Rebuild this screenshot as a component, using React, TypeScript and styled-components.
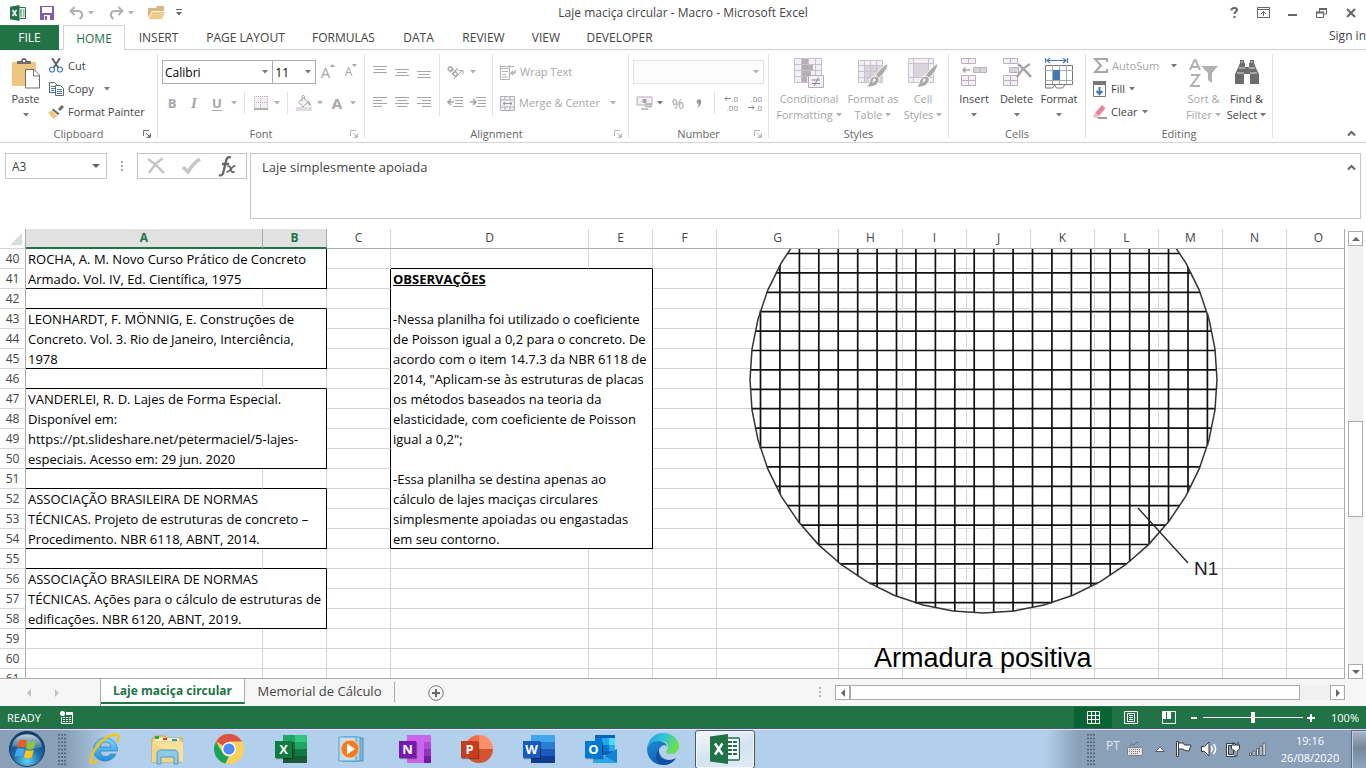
import React from 'react';
import styled, { createGlobalStyle, css } from 'styled-components';

const UI = '"Open Sans", "Noto Sans", sans-serif';
const GREEN = '#217346';

const GlobalStyle = createGlobalStyle`
  * { box-sizing: border-box; }
  html, body, #root { height: 100%; }
  body { margin: 0; background: #fff; font-family: ${UI}; font-size: 11px; color: #444; overflow: hidden; }
  button, input, select, textarea { font: inherit; color: inherit; margin: 0; padding: 0; border: 0; background: none; border-radius: 0; outline: none; }
  svg { display: block; flex: none; }
`;

/* ---------- frame ---------- */

const Window = styled.div`
  display: flex;
  flex-direction: column;
  height: 100vh;
  overflow: hidden;
`;

const TitleBar = styled.header`
  display: grid;
  grid-template-columns: 1fr auto 1fr;
  align-items: center;
  height: 25px;
  flex: none;
`;

const QuickAccess = styled.div`
  display: flex;
  align-items: center;
  padding-left: 10px;
  height: 22px;
`;

const HistoryPair = styled.div`
  display: flex;
  align-items: center;
  width: 40px;
`;

const WindowTitle = styled.h1`
  margin: 0;
  font-size: 12px;
  font-weight: 400;
  line-height: 24px;
`;

const WindowButtons = styled.div`
  display: flex;
  justify-content: flex-end;
  align-items: center;
  gap: 6px;
  padding-right: 4px;
  height: 22px;
`;

const IconButton = styled.button<{ $w?: number; $h?: number }>`
  display: flex;
  align-items: center;
  justify-content: center;
  flex: none;
  width: ${(p) => (p.$w ? `${p.$w}px` : 'auto')};
  height: ${(p) => (p.$h ? `${p.$h}px` : 'auto')};
`;

/* ---------- ribbon tabs ---------- */

const TabRow = styled.nav`
  display: flex;
  height: 25px;
  flex: none;
  border-bottom: 1px solid #d4d4d4;
`;

const FileTab = styled.button`
  width: 59px;
  height: 25px;
  margin-right: 4px;
  background: ${GREEN};
  color: #fff;
  font-size: 12px;
`;

const RibbonTab = styled.button<{ $active?: boolean; $w: number }>`
  width: ${(p) => p.$w}px;
  height: 25px;
  font-size: 12px;
  white-space: nowrap;
  ${(p) =>
    p.$active &&
    css`
      color: ${GREEN};
      background: #fff;
      border: 1px solid #d4d4d4;
      border-bottom: 0;
    `}
`;

const SignIn = styled.a`
  margin-left: auto;
  line-height: 21px;
  color: #444;
  text-decoration: none;
  font-size: 12px;
  white-space: nowrap;
`;

/* ---------- ribbon ---------- */

const Ribbon = styled.section`
  display: flex;
  height: 93px;
  flex: none;
  padding: 4px 0;
  border-bottom: 1px solid #d4d4d4;
`;

const Group = styled.section<{ $w: number }>`
  display: flex;
  flex-direction: column;
  width: ${(p) => p.$w}px;
  flex: none;
  border-right: 1px solid #e1e1e1;
`;

const GroupBody = styled.div<{ $left?: number }>`
  display: flex;
  flex: 1;
  padding-left: ${(p) => p.$left ?? 0}px;
`;

const GroupFooter = styled.div`
  display: grid;
  grid-template-columns: 12px 1fr 12px;
  align-items: center;
  height: 14px;
  margin-bottom: -3px;
  padding: 0 2px;
  color: #666;
  text-align: center;
  line-height: 14px;
`;

const BigButton = styled.button<{ $w: number; $dim?: boolean }>`
  display: flex;
  flex-direction: column;
  align-items: center;
  width: ${(p) => p.$w}px;
  padding-top: 4px;
  line-height: 16px;
  color: ${(p) => (p.$dim ? '#a6a6a6' : '#444')};
  white-space: nowrap;
  svg:first-child { margin-bottom: 2px; }
`;

const LabelRow = styled.span`
  display: flex;
  align-items: center;
  justify-content: center;
  gap: 3px;
  height: 16px;
  && svg { margin: 0; }
`;

const Stack = styled.div<{ $w?: number }>`
  display: flex;
  flex-direction: column;
  width: ${(p) => (p.$w ? `${p.$w}px` : 'auto')};
`;

const SmallButton = styled.button<{ $dim?: boolean; $gap?: number }>`
  display: flex;
  align-items: center;
  height: 23px;
  gap: 4px;
  color: ${(p) => (p.$dim ? '#a6a6a6' : '#444')};
  white-space: nowrap;
  line-height: 16px;
  > svg:last-child { margin-left: ${(p) => p.$gap ?? 0}px; }
`;

const IconCell = styled.span`
  display: flex;
  justify-content: center;
  width: 16px;
`;

const ToolRow = styled.div<{ $top?: number }>`
  display: flex;
  align-items: center;
  height: 24px;
  margin-top: ${(p) => p.$top ?? 0}px;
`;

const ToolColumn = styled.div<{ $w: number; $line?: boolean; $left?: number }>`
  display: flex;
  flex-direction: column;
  width: ${(p) => p.$w}px;
  padding: 6px 0 0 ${(p) => p.$left ?? 0}px;
  ${(p) => p.$line && 'border-right: 1px solid #e1e1e1; height: 62px;'}
`;

const Divider = styled.span<{ $m?: number }>`
  width: 1px;
  height: 22px;
  margin: 0 ${(p) => p.$m ?? 8}px;
  background: #e1e1e1;
`;

const Combo = styled.label<{ $w: number; $dim?: boolean; $overlap?: boolean }>`
  position: relative;
  display: flex;
  align-items: center;
  width: ${(p) => p.$w}px;
  height: 24px;
  margin-left: ${(p) => (p.$overlap ? -1 : 0)}px;
  border: 1px solid ${(p) => (p.$dim ? '#e1e1e1' : '#ababab')};
  background: ${(p) => (p.$dim ? '#fdfdfd' : '#fff')};
  select {
    appearance: none;
    width: 100%;
    height: 22px;
    padding-left: 2px;
    font-size: 12px;
    color: #000;
  }
  svg { position: absolute; right: 4px; }
`;

const Glyph = styled.span<{ $size?: number; $bold?: boolean; $italic?: boolean; $under?: boolean }>`
  font-size: ${(p) => p.$size ?? 13}px;
  font-weight: ${(p) => (p.$bold ? 700 : 400)};
  font-style: ${(p) => (p.$italic ? 'italic' : 'normal')};
  font-family: ${(p) => (p.$italic ? '"Liberation Serif", serif' : UI)};
  text-decoration: ${(p) => (p.$under ? 'underline' : 'none')};
  text-underline-offset: 2px;
  line-height: 20px;
  color: #a6a6a6;
`;

const SizeMark = styled.span`
  height: 16px;
`;

const CollapseSlot = styled.div`
  display: flex;
  flex: 1;
  align-items: flex-end;
  justify-content: flex-end;
  padding: 0 10px 1px 0;
`;

/* ---------- formula bar ---------- */

const FormulaBar = styled.section`
  display: flex;
  align-items: flex-start;
  height: 86px;
  flex: none;
  padding: 10px 5px 10px;
`;

const NameBox = styled.label`
  display: flex;
  align-items: center;
  width: 102px;
  height: 26px;
  padding: 0 6px;
  border: 1px solid #c6c6c6;
  input { width: 80px; font-size: 12px; }
`;

const Grip = styled.span`
  display: flex;
  width: 30px;
  height: 26px;
  align-items: center;
  justify-content: center;
`;

const FormulaButtons = styled.div`
  display: flex;
  align-items: center;
  width: 110px;
  height: 26px;
  padding: 0 9px;
  justify-content: space-between;
  border: 1px solid #c6c6c6;
`;

const FormulaInput = styled.div`
  display: flex;
  flex: 1;
  height: 66px;
  margin-left: 3px;
  padding: 4px 3px 4px 11px;
  border: 1px solid #c6c6c6;
  textarea {
    flex: 1;
    height: 56px;
    resize: none;
    font-size: 13px;
    line-height: 18px;
  }
  svg { margin-top: 6px; }
`;

/* ---------- sheet ---------- */

const Workspace = styled.main`
  display: flex;
  flex: 1;
  min-height: 0;
`;

const SheetPane = styled.div`
  position: relative;
  flex: 1;
  overflow: hidden;
  border-right: 1px solid #ababab;
  border-bottom: 1px solid #ababab;
`;

const Grid = styled.table`
  width: 1px;
  table-layout: fixed;
  border-collapse: separate;
  border-spacing: 0;
  color: #000;
  tr { height: 20px; }
  th, td { padding: 0; vertical-align: top; }
`;

const SheetCol = styled.col<{ $w: number }>`
  width: ${(p) => p.$w}px;
`;

const ColHead = styled.th<{ $selected?: boolean }>`
  height: 20px;
  font-size: 12px;
  line-height: 18px;
  font-weight: ${(p) => (p.$selected ? 700 : 400)};
  color: ${(p) => (p.$selected ? GREEN : '#444')};
  background: ${(p) => (p.$selected ? '#e1e1e1' : '#fff')};
  border-right: 1px solid ${(p) => (p.$selected ? '#ababab' : '#d8d8d8')};
  border-bottom: ${(p) => (p.$selected ? `2px solid ${GREEN}` : '1px solid #ababab')};
`;

const Corner = styled.th`
  border-right: 1px solid #ababab;
  border-bottom: 1px solid #d4d4d4;
  svg { margin: 4px 0 0 10px; }
`;

const RowHead = styled.th`
  height: 20px;
  font-size: 12px;
  font-weight: 400;
  line-height: 19px;
  color: #444;
  border-right: 1px solid #ababab;
  border-bottom: 1px solid #d8d8d8;
`;

const Cell = styled.td<{ $r?: boolean; $b?: boolean }>`
  border-right: 1px solid ${(p) => (p.$r ? '#000' : '#d4d4d4')};
  border-bottom: 1px solid ${(p) => (p.$b ? '#000' : '#d4d4d4')};
`;

const CellText = styled.div`
  margin-bottom: -1px;
  padding: 0 2px;
  font-size: 13px;
  line-height: 20px;
  white-space: pre;
  strong { text-decoration: underline; }
`;

const Drawing = styled.svg`
  position: absolute;
  left: 717px;
  top: 20px;
  font-family: "Liberation Sans", Arial, sans-serif;
`;

/* ---------- scroll bars ---------- */

const VScroll = styled.div`
  display: flex;
  flex-direction: column;
  width: 18px;
  margin: 2px 3px 0 0;
  padding-left: 3px;
`;

const ScrollButton = styled.button`
  display: flex;
  align-items: center;
  justify-content: center;
  flex: none;
  width: 15px;
  height: 15px;
  border: 1px solid #ababab;
  background: #fff;
`;

const Track = styled.div<{ $grow: number }>`
  flex: ${(p) => p.$grow} 0 0;
  background: #f0f0f0;
`;

const Thumb = styled.div<{ $grow: number }>`
  flex: ${(p) => p.$grow} 0 0;
  border: 1px solid #ababab;
  background: #fff;
`;

/* ---------- sheet tabs ---------- */

const SheetTabs = styled.footer`
  display: flex;
  height: 27px;
  flex: none;
  background: #f6f6f6;
`;

const TabArrows = styled.div`
  display: flex;
  width: 101px;
  padding: 0 39px 0 25px;
  align-items: center;
  justify-content: space-between;
  border-right: 1px solid #ababab;
`;

const SheetTab = styled.button<{ $active?: boolean; $w: number }>`
  width: ${(p) => p.$w}px;
  height: 24px;
  font-size: 12px;
  white-space: nowrap;
  ${(p) =>
    p.$active
      ? css`
          margin-top: -1px;
          height: 26px;
          background: #fff;
          color: ${GREEN};
          font-weight: 700;
          border-right: 1px solid #ababab;
          border-bottom: 2px solid ${GREEN};
        `
      : css`
          height: 20px;
          margin-top: 3px;
          padding-bottom: 2px;
          font-size: 13px;
          line-height: 18px;
          border-right: 1px solid #ababab;
        `}
`;

const HScroll = styled.div`
  display: flex;
  width: 510px;
  height: 15px;
  margin: 6px 21px 0 0;
`;

const Spacer = styled.div`
  flex: 1;
`;

/* ---------- status bar ---------- */

const StatusBar = styled.footer`
  display: flex;
  align-items: center;
  height: 23px;
  flex: none;
  padding: 0 7px;
  background: ${GREEN};
  color: #fff;
  font-size: 11px;
`;

const ViewButton = styled.button<{ $active?: boolean }>`
  display: flex;
  align-items: center;
  justify-content: center;
  width: 38px;
  height: 21px;
  background: ${(p) => (p.$active ? '#0a6332' : 'transparent')};
`;

const ZoomSlider = styled.input`
  appearance: none;
  width: 100px;
  height: 11px;
  margin: 0 4px;
  background: linear-gradient(#fff, #fff) center / 100% 1px no-repeat;
  &::-webkit-slider-thumb {
    appearance: none;
    width: 4px;
    height: 11px;
    background: #fff;
  }
`;

/* ---------- taskbar ---------- */

const Taskbar = styled.footer`
  display: flex;
  align-items: center;
  height: 39px;
  flex: none;
  border-top: 1px solid #dce8f4;
  box-shadow: 0 -1px 0 #47596b;
  background: linear-gradient(90deg, #8aa0b8 0, #8aa0b8 66px, #b2cfeb 112px, #b2cfeb calc(100% - 320px), #8aa0b8 calc(100% - 288px), #8aa0b8 100%);
`;

const TaskButton = styled.button<{ $active?: boolean }>`
  display: flex;
  align-items: center;
  justify-content: center;
  width: ${(p) => (p.$active ? 60 : 62)}px;
  height: 39px;
  margin-left: ${(p) => (p.$active ? 1 : 0)}px;
  ${(p) =>
    p.$active &&
    css`
      border: 1px solid #4a5a6b;
      border-radius: 3px;
      background: linear-gradient(160deg, #f6f9fc, #d3e2f1 55%, #e2ecf6);
      box-shadow: inset 0 0 0 1px #f4f8fc;
    `}
`;

const LaunchGrip = styled.span`
  display: flex;
  width: 20px;
  padding-left: 4px;
`;

const Tray = styled.div`
  display: flex;
  align-items: center;
  margin-left: auto;
  color: #fff;
`;

const Language = styled.span`
  width: 15px;
  margin-left: 10px;
  color: #e3e9ef;
  font-size: 12px;
  line-height: 30px;
  height: 36px;
`;

const TraySlot = styled.span<{ $w: number }>`
  display: flex;
  justify-content: center;
  width: ${(p) => p.$w}px;
`;

const Clock = styled.div`
  width: 82px;
  text-align: center;
  line-height: 17px;
  font-size: 11px;
`;

const ShowDesktop = styled.button`
  width: 15px;
  height: 39px;
  border: 1px solid #56697c;
  border-right: 0;
  background: linear-gradient(#a9b8c8, #74889d 45%, #8fa6bd);
  box-shadow: inset 1px 1px 0 #c3d0dd;
`;

/* ---------- icons ---------- */

const Caret = ({ c = '#777' }: { c?: string }) => (
  <svg width="6" height="4" viewBox="0 0 6 4"><path d="M0 0h6L3 3.4z" fill={c} /></svg>
);
const DIM = '#b1b1b1';
const PALE = '#f4eef6';

const Launcher = ({ dim }: { dim?: boolean }) => (
  <svg width="8" height="8" viewBox="0 0 8 8" fill="none" stroke={dim ? '#b8b8b8' : '#777'}>
    <path d="M.5 6V.5H6M3 3l3 3M7.5 3.5v4h-4" />
    <path d="M7 4.500V7H4.500z" fill={dim ? '#b8b8b8' : '#777'} stroke="none" />
  </svg>
);

const ExcelSmall = () => (
  <svg width="16" height="16" viewBox="0 0 16 16">
    <path d="M9 2.500h6.500v11H9" fill="#fff" stroke={GREEN} />
    <path d="M10 5h2M13 5h1.500M10 7h2M13 7h1.500M10 9h2M13 9h1.500M10 11h2M13 11h1.500" stroke={GREEN} />
    <path d="M0 1.700L9.500 0v16L0 14.300z" fill={GREEN} />
    <path d="M2.500 5l4 6M6.500 5l-4 6" stroke="#fff" strokeWidth="1.500" />
  </svg>
);
const SaveIcon = () => (
  <svg width="14" height="14" viewBox="0 0 14 14">
    <path d="M0 0h14v14H0z" fill="#8659b0" /><path d="M2 1h10v6H2zM4 9h6v5H4z" fill="#fff" /><path d="M5 10h2v4H5z" fill="#8659b0" />
  </svg>
);
const UndoIcon = ({ flip }: { flip?: boolean }) => (
  <svg width="15" height="14" viewBox="0 0 15 14" fill="none" stroke="#b1b1b1" strokeWidth="2">
    <g transform={flip ? 'matrix(-1 0 0 1 15 0)' : undefined}>
      <path d="M5.500 1L1.500 5l4 4M2 5h7c5 0 5.500 5.500 1.500 8" />
    </g>
  </svg>
);
const FolderIcon = () => (
  <svg width="17" height="13" viewBox="0 0 17 13">
    <path d="M0 12V2h8l1-2h7v5H4z" fill="#dcb67a" /><path d="M1 13l3-7h13l-3 7z" fill="#f0cb85" />
  </svg>
);
const CustomizeIcon = () => (
  <svg width="6" height="7" viewBox="0 0 6 7"><path d="M0 0h6v1H0zM0 3h6L3 6.500z" fill="#666" /></svg>
);
const HelpIcon = () => (
  <svg width="9" height="11" viewBox="0 0 9 11" fill="none" stroke="#666" strokeWidth="2">
    <path d="M1.500 3.500V2.500c1-2 5.500-2 5.500.500 0 1.500-2.500 1.500-2.500 4M4.500 9v2" />
  </svg>
);
const RibbonOptionsIcon = () => (
  <svg width="13" height="11" viewBox="0 0 13 11" fill="none" stroke="#666">
    <path d="M.5.500h12v10H.5zM0 2.500h13M6.500 9V4.500M4 7l2.500-2.500L9 7" />
  </svg>
);
const MinIcon = () => <svg width="9" height="8" viewBox="0 0 9 8"><path d="M0 5h9v2H0z" fill="#666" /></svg>;
const RestoreIcon = () => (
  <svg width="11" height="10" viewBox="0 0 11 10" fill="none" stroke="#666">
    <path d="M.5 4.500h7v5h-7zM3.500 4V.5h7v5.500H8" /><path d="M0 4.500h8M3 1h8" strokeWidth="2" />
  </svg>
);
const CloseIcon = () => (
  <svg width="10" height="10" viewBox="0 0 10 10"><path d="M1 1l8 8M9 1L1 9" stroke="#666" strokeWidth="2" /></svg>
);

const PasteIcon = () => (
  <svg width="28" height="31" viewBox="0 0 28 31">
    <rect x="0" y="4" width="24" height="24" rx="1" fill="#eec581" />
    <path d="M5 6V3h4c0-4 6-4 6 0h4v3z" fill="#6d6d6d" /><path d="M11 2h2v2h-2z" fill="#fff" />
    <path d="M13.500 11.500H22l5.500 5.500v13h-14z" fill="#fff" stroke="#6d6d6d" />
    <path d="M21.500 12v6h6" fill="none" stroke="#6d6d6d" />
  </svg>
);
const CutIcon = () => (
  <svg width="14" height="15" viewBox="0 0 14 15" fill="none">
    <path d="M3 0l6.500 10M11 0L4.500 10" stroke="#666" strokeWidth="2" />
    <circle cx="3" cy="11.500" r="2.500" stroke="#3f7ab5" strokeWidth="1.200" /><circle cx="11" cy="11.500" r="2.500" stroke="#3f7ab5" strokeWidth="1.200" />
  </svg>
);
const CopyIcon = () => (
  <svg width="15" height="14" viewBox="0 0 15 14" fill="#fff" stroke="#666">
    <path d="M.5.500h5l2 2v8h-7z" /><path d="M2 4.500h4M2 6.500h4M2 8.500h3" stroke="#3f7ab5" />
    <path d="M6.500 3.500h5l3 3v7h-8z" /><path d="M8 7.500h5M8 9.500h5M8 11.500h5" stroke="#3f7ab5" />
  </svg>
);
const PainterIcon = () => (
  <svg width="16" height="14" viewBox="0 0 16 14">
    <path d="M10 4l4-4 2 2-4 4z" fill="#666" /><path d="M5 3.500l6.500 5L10 10 4 5z" fill="#666" />
    <path d="M3.500 5.500l6 5L5.500 14 0 7.500z" fill="#eec581" />
  </svg>
);
const Borders = () => (
  <svg width="14" height="14" viewBox="0 0 14 14">
    <path d="M0 0h14v13H0z" fill={PALE} />
    <path d="M.5 0v13M6.500 0v13M13.500 0v13M0 .5h14M0 6.500h14" stroke="#b1b1b1" strokeDasharray="1 1" />
    <path d="M0 13h14" stroke="#999" strokeWidth="1.500" />
  </svg>
);
const FillIcon = () => (
  <svg width="16" height="16" viewBox="0 0 16 16">
    <path d="M0 12h16v4H0z" fill="#e2dbe4" />
    <path d="M2.500 7.500L7 2.500l5 4.500-5 5z" fill="#f4eef6" stroke="#a6a6a6" /><path d="M6 6V1.500c0-1.500 2.500-1.500 2.500 0V4" fill="none" stroke="#a6a6a6" />
    <path d="M12 6c2 1 3 3 3 5-2 0-2-3-4-3z" fill="#a6a6a6" />
  </svg>
);
const Lines = ({ d }: { d: string }) => (
  <svg width="14" height="12" viewBox="0 0 14 12"><path d={d} stroke="#a6a6a6" fill="none" /></svg>
);
const Orient = () => (
  <svg width="17" height="15" viewBox="0 0 17 15" fill="none" stroke="#a6a6a6">
    <g transform="rotate(45 6 6)" strokeWidth="1.300"><circle cx="2.500" cy="6.500" r="2" /><path d="M5 4v5M7.500 1v8" /><circle cx="9.800" cy="6.500" r="2" /></g>
    <path d="M7 14l8.500-8.500M12 5.500h4v4" />
  </svg>
);
const Indent = ({ out }: { out?: boolean }) => (
  <svg width="16" height="12" viewBox="0 0 16 12">
    <path d="M6 .5h10M8 3.500h8M8 6.500h8M6 9.500h10" stroke="#a6a6a6" />
    <path d={out ? 'M7 5H1M4 2L1 5l3 3' : 'M0 5h6M3 2l3 3-3 3'} stroke="#a6a6a6" strokeWidth="1.600" fill="none" />
  </svg>
);
const WrapIcon = () => (
  <svg width="16" height="15" viewBox="0 0 16 15" fill="none" stroke={DIM}>
    <path d="M0 1.500h14M.5 0v4M9.500 0v4M.5 3.500h9v11h-9zM2 6.500h6M2 9.500h4M2 12h6" /><path d="M15 5v3h-4M13 6l-2 2 2 2" strokeWidth="1.300" />
  </svg>
);
const MergeIcon = () => (
  <svg width="15" height="15" viewBox="0 0 15 15" fill={PALE} stroke={DIM}>
    <path d="M.5.500h14v14H.5zM0 4h15M0 11h15M5 0v4M10 0v4M5 11v4M10 11v4" /><path d="M3 7.500h9M5 6L3 7.500 5 9M10 6l2 1.500L10 9" stroke="#999" />
  </svg>
);
const MoneyIcon = () => (
  <svg width="17" height="15" viewBox="0 0 17 15">
    <path d="M1 1h15v8H1z" fill={PALE} stroke={DIM} /><circle cx="8.500" cy="5" r="2.200" fill="#a6a6a6" />
    <path d="M9 8h7M9 10.500h7M5 13h7" stroke={DIM} strokeWidth="1.500" />
  </svg>
);
const Comma = () => (
  <svg width="6" height="9" viewBox="0 0 6 9"><circle cx="3" cy="2.500" r="2.300" fill="#999" /><path d="M5.200 2.500C5.200 6 3.500 8 1 8.800 2.500 7 3 6 2.500 4z" fill="#999" /></svg>
);
const DecText = styled.span`
  display: flex;
  flex-direction: column;
  align-items: flex-end;
  width: 16px;
  font-size: 8px;
  line-height: 8px;
  color: #888;
  span { display: flex; align-items: center; height: 9px; }
`;
const TinyArrow = ({ right }: { right?: boolean }) => (
  <svg width="7" height="5" viewBox="0 0 7 5" fill="none" stroke="#888"><path d={right ? 'M0 2.500h6M4 .5l2 2-2 2' : 'M7 2.500H1M3 .5l-2 2 2 2'} /></svg>
);

const CondIcon = () => (
  <svg width="30" height="31" viewBox="0 0 30 31">
    <path d="M.5.500h27v24H.5z" fill={PALE} stroke="#c8c2ca" />
    <path d="M0 6.500h28M0 12.500h28M0 18.500h28M7.500 0v25M14.500 0v25M21.500 0v25" stroke="#c8c2ca" />
    <path d="M8 1h6v5H8zM8 7h11v5H8zM8 13h9v5H8zM8 19h5v5H8z" fill={DIM} />
    <path d="M14.500 17.500h15v12h-15z" fill={PALE} stroke={DIM} />
    <path d="M18 22h8M18 25.500h8M24.500 19.500l-4.500 8.500" stroke="#888" fill="none" />
  </svg>
);
const Brush = () => (
  <g>
    <path d="M30 5c0 6-6 13-10 16l-3-3C20 13 25 8 30 5z" fill="#ababab" stroke="#fff" />
    <path d="M18 18c4 1 4 4 2 7-3 4-7 4-12 4 3-2 3-4 4-7 1-2 3-4 6-4z" fill="#ababab" stroke="#fff" />
    <path d="M16 20l2 2-4 3z" fill="#fff" />
  </g>
);
const TableIcon = () => (
  <svg width="30" height="31" viewBox="0 0 30 31">
    <path d="M.5 2.500h24v22H.5z" fill={PALE} stroke="#c8c2ca" /><path d="M6 8h19v16H6z" fill="#dad5dc" />
    <path d="M0 7.500h25M0 13.500h25M0 19.500h25M6.500 2v22M12.500 2v22M18.500 2v22" stroke="#c8c2ca" />
    <Brush />
  </svg>
);
const StylesIcon = () => (
  <svg width="30" height="31" viewBox="0 0 30 31">
    <path d="M.5.500h25v24H.5z" fill={PALE} stroke="#c8c2ca" /><path d="M0 5.500h26M0 19.500h26M5.500 0v25M20.500 0v25" stroke="#c8c2ca" />
    <path d="M6 6h14v13H6z" fill="#dad5dc" />
    <Brush />
  </svg>
);
const InsertIcon = () => (
  <svg width="28" height="31" viewBox="0 0 28 31" fill={PALE} stroke="#b8b3ba">
    <path d="M1.500.500h14v5h-14zM8.500.500v5M1.500 17.500h14v10h-14zM8.500 17v11M1 22.500h15" />
    <path d="M13.500 9.500h13v5h-13zM20 10v5" fill="#dad5dc" /><path d="M10 12H3M5.500 9.500L3 12l2.500 2.500" stroke="#a6a6a6" strokeWidth="1.500" fill="none" />
  </svg>
);
const DeleteIcon = () => (
  <svg width="30" height="31" viewBox="0 0 30 31" fill={PALE} stroke="#b8b3ba">
    <path d="M1.500.500h14v5h-14zM8.500.500v5M1.500 17.500h14v10h-14zM8.500 17v11M1 22.500h15" />
    <path d="M7.500 9.500h9v5h-9z" fill="#dad5dc" /><path d="M16 6c4 4 9 8 13 13M28 6c-6 3-10 8-13 13" stroke="#a6a6a6" strokeWidth="2.500" fill="none" />
  </svg>
);
const FormatIcon = () => (
  <svg width="28" height="31" viewBox="0 0 28 31" fill="#fff">
    <path d="M.5 0v5M22.500 0v5M2 2.500h19M5 0L2 2.500 5 5M18 0l3 2.500L18 5" stroke="#3f7ab5" strokeWidth="1.200" fill="none" />
    <path d="M.5 7.500h27v19H.5z" stroke="#777" /><path d="M0 12.500h28M0 22.500h28M7.500 7v19M14.500 7v19M21.500 7v19" stroke="#aaa" />
    <path d="M8 12h7v10H8z" fill="#3f7ab5" />
    <path d="M.5 26v4h7l2-3 2 3h6l3-4" stroke="#777" fill="none" />
  </svg>
);
const SigmaIcon = () => (
  <svg width="15" height="15" viewBox="0 0 15 15" fill="none" stroke="#a6a6a6" strokeWidth="2"><path d="M14 4V1H2l6 6.500L2 14h12v-3" /></svg>
);
const FillDownIcon = () => (
  <svg width="14" height="16" viewBox="0 0 14 16"><path d="M.5.500h12v15H.5z" fill="#fff" stroke="#777" /><path d="M0 0h13v4H0z" fill="#777" /><path d="M6.500 6v7M3.500 10l3 3 3-3" fill="none" stroke="#3f7ab5" strokeWidth="2" /></svg>
);
const EraserIcon = () => (
  <svg width="14" height="14" viewBox="0 0 14 14"><path d="M9 0l3.500 3-6.500 8L2 8z" fill="#e8849a" /><path d="M2 8l4 3-1.500 2H2L0 11z" fill="#f4bcc8" /><path d="M5 13h9" stroke="#777" strokeWidth="1.500" /></svg>
);
const SortIcon = () => (
  <svg width="30" height="31" viewBox="0 0 30 31" fill="none" stroke="#b1b1b1" strokeWidth="2">
    <path d="M1 12L5.500 2h1L11 12M2.500 9h7M2 17h8L2 28h9" /><path d="M12 8h17l-6 7v10l-4-3v-7z" fill="#b1b1b1" stroke="none" />
  </svg>
);
const FindIcon = () => (
  <svg width="26" height="31" viewBox="0 0 26 31" fill="#6d6d6d">
    <path d="M6 2h4v3h1v4h4V5h1V2h4v3l2 5 3 6v10h-9V16h-6v10H1V16l3-6 2-5z" /><path d="M5 10h6M15 10h6M3 15h7M16 15h7M8 3v2M18 3v2" stroke="#fff" strokeWidth=".8" />
  </svg>
);

const Arrow = ({ dir, c = '#666' }: { dir: 'up' | 'down' | 'left' | 'right'; c?: string }) => {
  const d = { up: 'M0 6l4-4 4 4z', down: 'M0 2h8L4 6z', left: 'M6 0v8L2 4z', right: 'M2 0l4 4-4 4z' }[dir];
  return <svg width="8" height="8" viewBox="0 0 8 8"><path d={d} fill={c} /></svg>;
};
const SizeTip = ({ down }: { down?: boolean }) => (
  <svg width="5" height="3" viewBox="0 0 5 3"><path d={down ? 'M0 0h5L2.500 3z' : 'M0 3h5L2.500 0z'} fill="#a6a6a6" /></svg>
);
const Dots = ({ c = '#a6a6a6' }: { c?: string }) => (
  <svg width="2" height="10" viewBox="0 0 2 10"><path d="M0 0h2v2H0zM0 4h2v2H0zM0 8h2v2H0z" fill={c} /></svg>
);
const Chevron = ({ w = 9 }: { w?: number }) => (
  <svg width={w} height="7" viewBox="0 0 9 7"><path d="M1 5.500l3.500-3.500L8 5.500" fill="none" stroke="#666" strokeWidth="2" /></svg>
);

const TaskGrip = () => (
  <svg width="9" height="31" viewBox="0 0 9 31">
    {[0, 3, 6].map((x) => <path key={x} d={`M${x + 1} 0v31`} stroke="#3f4d5c" strokeWidth="1.500" strokeDasharray="1.500 2.200" />)}
  </svg>
);

const StartOrb = () => (
  <svg width="36" height="36" viewBox="0 0 36 36">
    <defs>
      <radialGradient id="orb" cx=".5" cy=".85" r=".9"><stop offset="0" stopColor="#5fd0f5" /><stop offset=".45" stopColor="#1d6ba5" /><stop offset="1" stopColor="#0f3560" /></radialGradient>
      <linearGradient id="orbTop" x2="0" y2="1"><stop offset="0" stopColor="#fff" stopOpacity=".75" /><stop offset="1" stopColor="#fff" stopOpacity=".15" /></linearGradient>
    </defs>
    <circle cx="18" cy="18" r="17.500" fill="url(#orb)" stroke="#1c3b5c" />
    <path d="M3 16C4-1 32-1 33 16c-10 4-20-3-30 0z" fill="url(#orbTop)" />
    <path d="M10 9.500c3-1.500 5-1.500 7.500 0L16 17c-3-1.500-5-1.500-8 0z" fill="#ee5a24" />
    <path d="M18.800 10c3 1.500 5 1.500 8.200 0l-2 7.500c-3 1.500-5 1.500-8 0z" fill="#8cc63f" />
    <path d="M7.500 18.200c3-1.300 5-1.300 8 0L13.500 26c-3-1.500-5-1.500-8 0z" fill="#3fa9f5" />
    <path d="M16.800 18.800c3 1.400 5 1.400 8 0l-2 7.500c-3 1.400-5 1.400-8 0z" fill="#fcc419" />
  </svg>
);
const IEIcon = () => (
  <svg width="32" height="32" viewBox="0 0 32 32" fill="none">
    <defs><linearGradient id="ieb" x2="0" y2="1"><stop offset="0" stopColor="#7fd5f8" /><stop offset="1" stopColor="#1e8fd8" /></linearGradient></defs>
    <path d="M27 21c-2 4-6 7-11 7C9 28 4.500 23 4.500 16.500S10 5 16.500 5 29 10 28.500 18H11c0 3.500 2 5.500 5.500 5.500 2 0 4-.8 5-2.500zM11 14h11c0-3-2.500-4.800-5.500-4.800S11.500 11 11 14z" fill="url(#ieb)" stroke="#1677bd" strokeWidth=".6" />
    <path d="M8 27.500c-4 4-8 3-6-3C5 15 14 5 23 2c6-2 8 1 5 7" stroke="#f6c21c" strokeWidth="2.500" />
  </svg>
);
const ExplorerIcon = () => (
  <svg width="34" height="32" viewBox="0 0 34 32">
    <path d="M2 5h3V3h10l2 2h15v24H2z" fill="#f3d67b" stroke="#c9a24a" /><path d="M5 5h24v3H5z" fill="#fff" opacity=".7" />
    <path d="M5 3h4v3H5z" fill="#2fa83e" /><path d="M13 5h4v2h-4z" fill="#d33" /><path d="M22 6h5v2h-5z" fill="#29c" />
    <path d="M2 9h31v20H2z" fill="#f7e19b" /><path d="M2 9l31 20H2z" fill="#f0cf76" opacity=".6" />
    <path d="M7 31V21c0-3 2-4 4-4h13c3 0 4 2 4 4v10h-4v-7H11v7z" fill="#8ec9e8" stroke="#4c9bc9" />
  </svg>
);
const ChromeIcon = () => (
  <svg width="30" height="30" viewBox="0 0 30 30">
    <circle cx="15" cy="15" r="15" fill="#fbd05c" />
    <path d="M15 15L2 7.500A15 15 0 0 1 28 7.500H15z" fill="#de5246" />
    <path d="M2 7.500l6.500 11.200A7.500 7.500 0 0 0 15 22.500L11.500 29.600A15 15 0 0 1 2 7.500z" fill="#1aa260" />
    <path d="M15 22.500l-3.500 7.100 4 .4 6-11.300z" fill="#fbd05c" />
    <circle cx="15" cy="15" r="7" fill="#fff" /><circle cx="15" cy="15" r="5.600" fill="#4c8bf5" />
  </svg>
);
const Badge = styled.span<{ $c: string }>`
  position: absolute;
  left: 0;
  top: 6px;
  width: 17px;
  height: 17px;
  background: ${(p) => p.$c};
  color: #fff;
  font: 700 13px/17px ${UI};
  text-align: center;
  box-shadow: 1px 1px 1px rgba(0, 0, 0, 0.35);
`;
const OfficeTile = styled.span`
  position: relative;
  display: block;
  width: 32px;
  height: 28px;
`;
const OfficeIcon = ({ letter, badge, children }: { letter: string; badge: string; children: React.ReactNode }) => (
  <OfficeTile>
    <svg width="32" height="28" viewBox="0 0 32 28">{children}</svg>
    <Badge $c={badge}>{letter}</Badge>
  </OfficeTile>
);
const MediaIcon = () => (
  <svg width="30" height="28" viewBox="0 0 30 28">
    <path d="M9 3h16v23H9z" fill="#7fb9dc" stroke="#4f93bd" /><path d="M5 2h17v24H5z" fill="#a6d2ec" stroke="#5a9cc4" /><path d="M1 2h17v24H1z" fill="#c0e0f3" stroke="#5a9cc4" />
    <circle cx="12" cy="14" r="9" fill="#f47b20" stroke="#fbc79a" /><path d="M9 8.500l8 5.500-8 5.500z" fill="#fff" />
  </svg>
);
const EdgeIcon = () => (
  <svg width="32" height="32" viewBox="0 0 32 32">
    <defs>
      <linearGradient id="edgeTop" x2="1" y2=".4"><stop offset="0" stopColor="#1b9de2" /><stop offset=".5" stopColor="#2fc3d8" /><stop offset="1" stopColor="#6be04f" /></linearGradient>
      <linearGradient id="edgeLow" x2=".8" y2="1"><stop offset="0" stopColor="#1a8fdc" /><stop offset="1" stopColor="#0f4f9e" /></linearGradient>
    </defs>
    <path d="M0 16C1 6 8 0 16 0c10 0 16 7 16 13 0 5-4 8-8 8s-5-1-5-2 2-2 2-5c0-4-4-6-8-6C6 8 1 12 0 16z" fill="url(#edgeTop)" />
    <path d="M0 16C1 11 6 8 11 8c4 0 8 2 9 5-4-2-8 1-8 5 0 5 5 9 10 9 3 0 5-1 7-2-3 5-8 7-13 7C7 32 0 25 0 16z" fill="url(#edgeLow)" />
    <path d="M12 17c-1 7 5 12 12 10 2 0 4-1 5-2-3 5-8 7-12 7-7-1-11-8-5-15z" fill="#124f9c" />
  </svg>
);
const ExcelBig = () => (
  <svg width="30" height="32" viewBox="0 0 30 32">
    <path d="M16 5h12.500c1 0 1 0 1 1v20c0 1 0 1-1 1H16" fill="#fff" stroke={GREEN} strokeWidth="1.300" />
    <path d="M18 9h4M23 9h4M18 13h4M23 13h4M18 17h4M23 17h4M18 21h4M23 21h4" stroke={GREEN} strokeWidth="2" />
    <path d="M0 3.500L18 1v30L0 28.500z" fill={GREEN} /><path d="M5 10.500l7.500 11M12.500 10.500L5 21.500" stroke="#fff" strokeWidth="2.500" />
  </svg>
);

/* ---------- worksheet data ---------- */

const COLS: [string, number][] = [
  ['A', 237], ['B', 64], ['C', 64], ['D', 198], ['E', 64], ['F', 64], ['G', 122], ['H', 64],
  ['I', 64], ['J', 64], ['K', 64], ['L', 64], ['M', 64], ['N', 64], ['O', 64],
];
const FIRST = 40;
const LAST = 61;

type Box = { c: number; r: number; cs: number; rs: number; title?: string; text: string };
const BOXES: Box[] = [
  { c: 0, r: 40, cs: 2, rs: 2, text: 'ROCHA, A. M. Novo Curso Prático de Concreto\nArmado. Vol. IV, Ed. Científica, 1975' },
  { c: 0, r: 43, cs: 2, rs: 3, text: 'LEONHARDT, F. MÖNNIG, E. Construções de\nConcreto. Vol. 3. Rio de Janeiro, Interciência,\n1978' },
  { c: 0, r: 47, cs: 2, rs: 4, text: 'VANDERLEI, R. D. Lajes de Forma Especial.\nDisponível em:\nhttps://pt.slideshare.net/petermaciel/5-lajes-\nespeciais. Acesso em: 29 jun. 2020' },
  { c: 0, r: 52, cs: 2, rs: 3, text: 'ASSOCIAÇÃO BRASILEIRA DE NORMAS\nTÉCNICAS. Projeto de estruturas de concreto –\nProcedimento. NBR 6118, ABNT, 2014.' },
  { c: 0, r: 56, cs: 2, rs: 3, text: 'ASSOCIAÇÃO BRASILEIRA DE NORMAS\nTÉCNICAS. Ações para o cálculo de estruturas de\nedificações. NBR 6120, ABNT, 2019.' },
  {
    c: 3, r: 41, cs: 2, rs: 14, title: 'OBSERVAÇÕES',
    text: '\n\n-Nessa planilha foi utilizado o coeficiente\nde Poisson igual a 0,2 para o concreto. De\nacordo com o item 14.7.3 da NBR 6118 de\n2014, "Aplicam-se às estruturas de placas\nos métodos baseados na teoria da\nelasticidade, com coeficiente de Poisson\nigual a 0,2";\n\n-Essa planilha se destina apenas ao\ncálculo de lajes maciças circulares\nsimplesmente apoiadas ou engastadas\nem seu contorno.',
  },
];
const boxAt = (c: number, r: number) => BOXES.find((b) => c >= b.c && c < b.c + b.cs && r >= b.r && r < b.r + b.rs);

const SheetCell = ({ c, r }: { c: number; r: number }) => {
  const box = boxAt(c, r);
  if (box) {
    if (box.c !== c || box.r !== r) return null;
    return (
      <Cell colSpan={box.cs} rowSpan={box.rs} $r $b>
        <CellText>{box.title && <strong>{box.title}</strong>}{box.text}</CellText>
      </Cell>
    );
  }
  return <Cell $r={!!boxAt(c + 1, r)} $b={!!boxAt(c, r + 1)} />;
};

/* Plan of the slab reinforcement: a circular outline crossed by a regular mesh. */
const CX = 266.5;
const CY = 130.500;
const R = 233.500;
const range = (n: number) => Array.from({ length: n }, (_, i) => i);
const chord = (d: number) => Math.sqrt(Math.max(0, R * R - d * d));
const meshPath = [
  ...range(24).map((i) => {
    const x = 43.500 + i * 19.430;
    const h = chord(x - CX);
    return `M${x.toFixed(1)} ${(CY - h).toFixed(1)}V${(CY + h).toFixed(1)}`;
  }),
  ...range(19).map((i) => {
    const y = 4.500 + i * 19.400;
    const w = chord(y - CY);
    return `M${(CX - w).toFixed(1)} ${y.toFixed(1)}H${(CX + w).toFixed(1)}`;
  }),
].join('');
const outline = range(48).map((i) => {
  const a = (i * Math.PI) / 24;
  return `${(CX + R * Math.cos(a)).toFixed(1)},${(CY + R * Math.sin(a)).toFixed(1)}`;
}).join(' ');

const SlabDrawing = () => (
  <Drawing width="520" height="440" viewBox="0 0 520 440">
    <path d={meshPath} stroke="#fff" strokeWidth="5" />
    <path d={meshPath} stroke="#111" strokeWidth="1.700" />
    <polygon points={outline} fill="none" stroke="#333" strokeWidth="1.500" />
    <path d="M421 259l50 55" stroke="#222" strokeWidth="1.300" />
    <text x="477" y="326" fontSize="19" fill="#222">N1</text>
    <text x="157" y="418" fontSize="27" fill="#000">Armadura positiva</text>
  </Drawing>
);

/* ---------- app ---------- */

const TABS: [string, number][] = [
  ['INSERT', 67], ['PAGE LAYOUT', 107], ['FORMULAS', 89], ['DATA', 61], ['REVIEW', 69], ['VIEW', 56], ['DEVELOPER', 91],
];

export default function App() {
  return (
    <Window>
      <GlobalStyle />
      <TitleBar>
        <QuickAccess>
          <IconButton $w={16} aria-label="Excel"><ExcelSmall /></IconButton>
          <IconButton $w={42} aria-label="Save"><SaveIcon /></IconButton>
          <HistoryPair>
            <IconButton $w={16} aria-label="Undo"><UndoIcon /></IconButton>
            <IconButton $w={14} aria-label="Undo history"><Caret c="#b1b1b1" /></IconButton>
          </HistoryPair>
          <HistoryPair>
            <IconButton $w={16} aria-label="Redo"><UndoIcon flip /></IconButton>
            <IconButton $w={14} aria-label="Redo history"><Caret c="#b1b1b1" /></IconButton>
          </HistoryPair>
          <IconButton $w={16} aria-label="Open"><FolderIcon /></IconButton>
          <IconButton $w={30} aria-label="Customize"><CustomizeIcon /></IconButton>
        </QuickAccess>
        <WindowTitle>Laje maciça circular - Macro - Microsoft Excel</WindowTitle>
        <WindowButtons>
          <IconButton $w={23} aria-label="Help"><HelpIcon /></IconButton>
          <IconButton $w={23} aria-label="Ribbon options"><RibbonOptionsIcon /></IconButton>
          <IconButton $w={23} aria-label="Minimize"><MinIcon /></IconButton>
          <IconButton $w={23} aria-label="Restore"><RestoreIcon /></IconButton>
          <IconButton $w={23} aria-label="Close"><CloseIcon /></IconButton>
        </WindowButtons>
      </TitleBar>

      <TabRow>
        <FileTab>FILE</FileTab>
        <RibbonTab $active $w={62}>HOME</RibbonTab>
        {TABS.map(([t, w]) => <RibbonTab key={t} $w={w}>{t}</RibbonTab>)}
        <SignIn href="#signin">Sign in</SignIn>
      </TabRow>

      <Ribbon>
        <Group $w={158}>
          <GroupBody $left={3}>
            <BigButton $w={45}><PasteIcon /><LabelRow>Paste</LabelRow><LabelRow><Caret /></LabelRow></BigButton>
            <Stack>
              <SmallButton><IconCell><CutIcon /></IconCell>Cut</SmallButton>
              <SmallButton $gap={6}><IconCell><CopyIcon /></IconCell>Copy<Caret /></SmallButton>
              <SmallButton><IconCell><PainterIcon /></IconCell>Format Painter</SmallButton>
            </Stack>
          </GroupBody>
          <GroupFooter><i /><span>Clipboard</span><Launcher /></GroupFooter>
        </Group>

        <Group $w={207}>
          <GroupBody $left={4}>
            <ToolColumn $w={200}>
              <ToolRow>
                <Combo $w={112}><select aria-label="Font"><option>Calibri</option></select><Caret /></Combo>
                <Combo $w={44} $overlap><select aria-label="Font size"><option>11</option></select><Caret /></Combo>
                <IconButton $w={24} aria-label="Increase font size"><Glyph $size={15}>A</Glyph><SizeMark><SizeTip /></SizeMark></IconButton>
                <IconButton $w={22} aria-label="Decrease font size"><Glyph $size={12}>A</Glyph><SizeMark><SizeTip down /></SizeMark></IconButton>
              </ToolRow>
              <ToolRow $top={7}>
                <IconButton $w={20}><Glyph $bold>B</Glyph></IconButton>
                <IconButton $w={24}><Glyph $italic $bold $size={15}>I</Glyph></IconButton>
                <IconButton $w={22}><Glyph $bold $under>U</Glyph></IconButton>
                <IconButton $w={12} aria-label="Underline style"><Caret c={DIM} /></IconButton>
                <Divider $m={4} />
                <IconButton $w={23} aria-label="Borders"><Borders /></IconButton>
                <IconButton $w={10} aria-label="Border style"><Caret c={DIM} /></IconButton>
                <Divider $m={5} />
                <IconButton $w={22} aria-label="Fill colour"><FillIcon /></IconButton>
                <IconButton $w={10} aria-label="Fill colours"><Caret c={DIM} /></IconButton>
                <IconButton $w={24}><Glyph $bold $size={15}>A</Glyph></IconButton>
                <IconButton $w={8} aria-label="Font colours"><Caret c={DIM} /></IconButton>
              </ToolRow>
            </ToolColumn>
          </GroupBody>
          <GroupFooter><i /><span>Font</span><Launcher dim /></GroupFooter>
        </Group>

        <Group $w={264}>
          <GroupBody $left={4}>
            <ToolColumn $w={71} $line>
              <ToolRow>
                <IconButton $w={22} $h={18} aria-label="Top align"><Lines d="M0 .5h14M2 3.500h10M0 6.500h14" /></IconButton>
                <IconButton $w={22} $h={18} aria-label="Middle align"><Lines d="M0 3.500h14M2 6.500h10M0 9.500h14" /></IconButton>
                <IconButton $w={22} $h={18} aria-label="Bottom align"><Lines d="M0 5.500h14M2 8.500h10M0 11.500h14" /></IconButton>
              </ToolRow>
              <ToolRow $top={7}>
                <IconButton $w={22} aria-label="Align left"><Lines d="M0 .5h14M0 3.500h9M0 6.500h14M0 9.500h9" /></IconButton>
                <IconButton $w={22} aria-label="Center"><Lines d="M0 .5h14M2 3.500h10M0 6.500h14M2 9.500h10" /></IconButton>
                <IconButton $w={22} aria-label="Align right"><Lines d="M0 .5h14M5 3.500h9M0 6.500h14M5 9.500h9" /></IconButton>
              </ToolRow>
            </ToolColumn>
            <ToolColumn $w={53} $line>
              <ToolRow>
                <IconButton $w={30} aria-label="Orientation"><Orient /></IconButton><Caret c={DIM} />
              </ToolRow>
              <ToolRow $top={7}>
                <IconButton $w={30} aria-label="Decrease indent"><Indent out /></IconButton><IconButton $w={16} aria-label="Increase indent"><Indent /></IconButton>
              </ToolRow>
            </ToolColumn>
            <ToolColumn $w={130} $left={7}>
              <ToolRow><SmallButton $dim><WrapIcon />Wrap Text</SmallButton></ToolRow>
              <ToolRow $top={7}><SmallButton $dim $gap={6}><MergeIcon />Merge &amp; Center<Caret c={DIM} /></SmallButton></ToolRow>
            </ToolColumn>
          </GroupBody>
          <GroupFooter><i /><span>Alignment</span><Launcher dim /></GroupFooter>
        </Group>

        <Group $w={140}>
          <GroupBody $left={4}>
            <ToolColumn $w={132}>
              <ToolRow><Combo $w={131} $dim><select aria-label="Number format" disabled><option value="" /></select><Caret c={DIM} /></Combo></ToolRow>
              <ToolRow $top={7}>
                <IconButton $w={22} aria-label="Accounting format"><MoneyIcon /></IconButton>
                <IconButton $w={10} aria-label="Currencies"><Caret /></IconButton>
                <IconButton $w={26}><Glyph $size={15}>%</Glyph></IconButton>
                <IconButton $w={16} aria-label="Comma style"><Comma /></IconButton>
                <Divider $m={7} />
                <IconButton $w={16}><DecText><span><TinyArrow />.0</span><span>.00</span></DecText></IconButton>
                <Spacer />
                <IconButton $w={22}><DecText><span>.00</span><span><TinyArrow right />.0</span></DecText></IconButton>
              </ToolRow>
            </ToolColumn>
          </GroupBody>
          <GroupFooter><i /><span>Number</span><Launcher dim /></GroupFooter>
        </Group>

        <Group $w={180}>
          <GroupBody $left={4}>
            <BigButton $w={72} $dim><CondIcon /><LabelRow>Conditional</LabelRow><LabelRow>Formatting<Caret c={DIM} /></LabelRow></BigButton>
            <BigButton $w={56} $dim><TableIcon /><LabelRow>Format as</LabelRow><LabelRow>Table<Caret c={DIM} /></LabelRow></BigButton>
            <BigButton $w={44} $dim><StylesIcon /><LabelRow>Cell</LabelRow><LabelRow>Styles<Caret c={DIM} /></LabelRow></BigButton>
          </GroupBody>
          <GroupFooter><i /><span>Styles</span></GroupFooter>
        </Group>

        <Group $w={137}>
          <GroupBody $left={4}>
            <BigButton $w={42}><InsertIcon /><LabelRow>Insert</LabelRow><LabelRow><Caret /></LabelRow></BigButton>
            <BigButton $w={43}><DeleteIcon /><LabelRow>Delete</LabelRow><LabelRow><Caret /></LabelRow></BigButton>
            <BigButton $w={42}><FormatIcon /><LabelRow>Format</LabelRow><LabelRow><Caret /></LabelRow></BigButton>
          </GroupBody>
          <GroupFooter><i /><span>Cells</span></GroupFooter>
        </Group>

        <Group $w={187}>
          <GroupBody $left={7}>
            <Stack $w={89}>
              <SmallButton $dim $gap={8}><SigmaIcon />AutoSum<Caret /></SmallButton>
              <SmallButton><FillDownIcon />Fill<Caret /></SmallButton>
              <SmallButton><EraserIcon />Clear<Caret /></SmallButton>
            </Stack>
            <BigButton $w={43} $dim><SortIcon /><LabelRow>Sort &amp;</LabelRow><LabelRow>Filter<Caret c={DIM} /></LabelRow></BigButton>
            <BigButton $w={43}><FindIcon /><LabelRow>Find &amp;</LabelRow><LabelRow>Select<Caret /></LabelRow></BigButton>
          </GroupBody>
          <GroupFooter><i /><span>Editing</span></GroupFooter>
        </Group>
        <CollapseSlot><IconButton aria-label="Collapse ribbon"><Chevron /></IconButton></CollapseSlot>
      </Ribbon>

      <FormulaBar>
        <NameBox><input aria-label="Name box" defaultValue="A3" /><Arrow dir="down" /></NameBox>
        <Grip><Dots /></Grip>
        <FormulaButtons>
          <IconButton aria-label="Cancel"><svg width="18" height="16" viewBox="0 0 18 16"><path d="M1 1c6 4 10 8 16 14M16 0C10 4 6 9 2 15" stroke="#c6c6c6" strokeWidth="2.500" fill="none" /></svg></IconButton>
          <IconButton aria-label="Enter"><svg width="19" height="16" viewBox="0 0 19 16"><path d="M1 9l5 5C9 9 13 4 18 1" stroke="#c6c6c6" strokeWidth="3.500" fill="none" /></svg></IconButton>
          <IconButton aria-label="Insert function">
            <svg width="19" height="21" viewBox="0 0 19 21" fill="none" stroke="#666">
              <path d="M1 19c3 1.500 4-1 4.800-4.500L8 5c.8-3.500 2.500-4.500 5-3.500M4 8h7" strokeWidth="2.300" />
              <path d="M9.500 10.500c2-1 2.500 0 3.200 2.500.8 3 1.600 4 3.800 2.500M17.500 10c-2-.5-3 1-4.500 3s-2.500 3.500-4.500 2.800" strokeWidth="1.800" />
            </svg>
          </IconButton>
        </FormulaButtons>
        <FormulaInput><textarea aria-label="Formula" defaultValue="Laje simplesmente apoiada" /><Chevron w={11} /></FormulaInput>
      </FormulaBar>

      <Workspace>
        <SheetPane>
          <Grid>
            <colgroup><SheetCol $w={26} />{COLS.map(([n, w]) => <SheetCol key={n} $w={w} />)}</colgroup>
            <thead>
              <tr>
                <Corner><svg width="12" height="12" viewBox="0 0 12 12"><path d="M12 0v12H0z" fill="#dcdcdc" /></svg></Corner>
                {COLS.map(([n], i) => <ColHead key={n} $selected={i < 2}>{n}</ColHead>)}
              </tr>
            </thead>
            <tbody>
              {range(LAST - FIRST + 1).map((i) => (
                <tr key={i}>
                  <RowHead>{FIRST + i}</RowHead>
                  {COLS.map((_, c) => <SheetCell key={c} c={c} r={FIRST + i} />)}
                </tr>
              ))}
            </tbody>
          </Grid>
          <SlabDrawing />
        </SheetPane>
        <VScroll>
          <ScrollButton aria-label="Scroll up"><Arrow dir="up" /></ScrollButton>
          <Track $grow={176} /><Thumb $grow={94} /><Track $grow={148} />
          <ScrollButton aria-label="Scroll down"><Arrow dir="down" /></ScrollButton>
        </VScroll>
      </Workspace>

      <SheetTabs>
        <TabArrows><Arrow dir="left" c="#c0c0c0" /><Arrow dir="right" c="#c0c0c0" /></TabArrows>
        <SheetTab $active $w={144}>Laje maciça circular</SheetTab>
        <SheetTab $w={150}>Memorial de Cálculo</SheetTab>
        <IconButton $w={82} aria-label="New sheet">
          <svg width="16" height="16" viewBox="0 0 16 16" fill="none"><circle cx="8" cy="8" r="7.300" stroke="#777" /><path d="M8 4v8M4 8h8" stroke="#666" strokeWidth="2" /></svg>
        </IconButton>
        <Spacer />
        <Grip><Dots c="#b8b8b8" /></Grip>
        <HScroll>
          <ScrollButton aria-label="Scroll left"><Arrow dir="left" /></ScrollButton>
          <Thumb $grow={450} /><Track $grow={30} />
          <ScrollButton aria-label="Scroll right"><Arrow dir="right" /></ScrollButton>
        </HScroll>
      </SheetTabs>

      <StatusBar>
        READY
        <IconButton $w={50} aria-label="Record macro">
          <svg width="13" height="13" viewBox="0 0 13 13"><circle cx="2.500" cy="2.500" r="2.500" fill="#fff" /><path d="M6 1.500h6.500v11h-11V6" fill="none" stroke="#fff" /><path d="M6 2h6v2H6z" fill="#fff" /><path d="M3 6.500h8M3 8.500h8M3 10.500h8" stroke="#fff" strokeDasharray="2 1" /></svg>
        </IconButton>
        <Spacer />
        <ViewButton $active aria-label="Normal view"><svg width="13" height="13" viewBox="0 0 13 13" fill="none" stroke="#fff"><path d="M.5.500h12v12H.5zM4.500 0v13M8.500 0v13M0 4.500h13M0 8.500h13" /></svg></ViewButton>
        <ViewButton aria-label="Page layout view"><svg width="14" height="13" viewBox="0 0 14 13" fill="none" stroke="#fff"><path d="M.5.500h13v12H.5zM3.500 2.500h7v8h-7zM5 4.500h4M5 6.500h4M5 8.500h4" /></svg></ViewButton>
        <ViewButton aria-label="Page break view"><svg width="14" height="13" viewBox="0 0 14 13" fill="none" stroke="#fff"><path d="M.5.500h13v12H.5z" /><path d="M1 1h3v7H1zM5 1h4v7H5z" fill="#fff" stroke="none" /></svg></ViewButton>
        <IconButton $w={11} aria-label="Zoom out"><svg width="6" height="2"><path d="M0 0h6v2H0z" fill="#fff" /></svg></IconButton>
        <ZoomSlider type="range" aria-label="Zoom" min={0} max={100} defaultValue={50} />
        <IconButton $w={8} aria-label="Zoom in"><svg width="8" height="8" viewBox="0 0 8 8"><path d="M4 0v8M0 4h8" stroke="#fff" strokeWidth="2" /></svg></IconButton>
        <IconButton $w={44} aria-label="Zoom level"><Spacer />100%</IconButton>
      </StatusBar>

      <Taskbar>
        <IconButton $w={54} aria-label="Start"><StartOrb /></IconButton>
        <LaunchGrip><TaskGrip /></LaunchGrip>
        <TaskButton aria-label="Internet Explorer"><IEIcon /></TaskButton>
        <TaskButton aria-label="Explorer"><ExplorerIcon /></TaskButton>
        <TaskButton aria-label="Chrome"><ChromeIcon /></TaskButton>
        <TaskButton aria-label="Excel">
          <OfficeIcon letter="X" badge="#107c41"><path d="M8 0h12v14H8z" fill="#21a366" /><path d="M20 0h12v7H20z" fill="#33c481" /><path d="M20 7h12v7H20z" fill="#21a366" /><path d="M8 7h12v7H8z" fill="#107c41" /><path d="M8 14h12v14H8z" fill="#185c37" /><path d="M20 14h12v7H20z" fill="#107c41" /><path d="M20 21h12v7H20z" fill="#185c37" /></OfficeIcon>
        </TaskButton>
        <TaskButton aria-label="Media Player"><MediaIcon /></TaskButton>
        <TaskButton aria-label="OneNote">
          <OfficeIcon letter="N" badge="#7719aa"><path d="M8 0h24v28H8z" fill="#ca64ea" /><path d="M25 7h7v7h-7z" fill="#ae4bd5" /><path d="M25 14h7v7h-7z" fill="#9332bf" /><path d="M25 21h7v7h-7z" fill="#7719aa" /></OfficeIcon>
        </TaskButton>
        <TaskButton aria-label="PowerPoint">
          <OfficeIcon letter="P" badge="#c43e1c"><path d="M18 14V0a14 14 0 0 0-14 14z" fill="#ed6c47" /><path d="M18 14V0a14 14 0 0 1 14 14z" fill="#ff8f6b" /><path d="M4 14h28a14 14 0 0 1-28 0z" fill="#d35230" /></OfficeIcon>
        </TaskButton>
        <TaskButton aria-label="Word">
          <OfficeIcon letter="W" badge="#185abd"><path d="M8 0h24v7H8z" fill="#41a5ee" /><path d="M8 7h24v7H8z" fill="#2b7cd3" /><path d="M8 14h24v7H8z" fill="#185abd" /><path d="M8 21h24v7H8z" fill="#103f91" /></OfficeIcon>
        </TaskButton>
        <TaskButton aria-label="Outlook">
          <OfficeIcon letter="O" badge="#0078d4"><path d="M10 0h20v20H10z" fill="#0364b8" /><path d="M10 3h7v7h-7z" fill="#0078d4" /><path d="M17 3h7v7h-7z" fill="#28a8ea" /><path d="M24 3h6v7h-6z" fill="#50d9ff" /><path d="M17 10h7v6h-7z" fill="#0078d4" /><path d="M24 10h6v6h-6z" fill="#28a8ea" /><path d="M8 14l12 7 12-7v14H8z" fill="#1a8fdd" /><path d="M8 15l24 13H8z" fill="#2aa5ea" /><path d="M32 14v13l-12-6z" fill="#1482cf" /></OfficeIcon>
        </TaskButton>
        <TaskButton aria-label="Edge"><EdgeIcon /></TaskButton>
        <TaskButton $active aria-label="Excel window"><ExcelBig /></TaskButton>
        <Tray>
          <TaskGrip />
          <Language>PT</Language>
          <TraySlot $w={28}><svg width="16" height="14" viewBox="0 0 16 14"><path d="M3 4c1-4 4 0 5-2s3-2 4-1" fill="none" stroke="#6f6f6f" /><rect x=".5" y="5.500" width="15" height="8" rx="1" fill="#e5e5e5" stroke="#7d7d7d" /><path d="M2 7.500h12M2 9.500h12M4 11.500h8" stroke="#777" strokeDasharray="1 1" /></svg></TraySlot>
          <TraySlot $w={22}><svg width="10" height="6" viewBox="0 0 10 6"><path d="M.8 5.500L5 .8l4.200 4.700z" fill="#fff" stroke="#4b5a6a" /></svg></TraySlot>
          <TraySlot $w={26}><svg width="16" height="16" viewBox="0 0 16 16" fill="#fff" stroke="#333c46"><path d="M.5.500h2v15h-2zM2.500 2h5l1 2h6.500l-2 6-5-1-1-1H2.500z" /></svg></TraySlot>
          <TraySlot $w={24}><svg width="17" height="16" viewBox="0 0 17 16" fill="#fff" stroke="#333c46"><path d="M.5 5.500h3L8 1v14l-4.500-4.500h-3z" /><path d="M10 5c1.500 2 1.500 4 0 6M12.500 3c2.500 3 2.500 7 0 10" fill="none" stroke="#fff" strokeWidth="1.500" /></svg></TraySlot>
          <TraySlot $w={24}><svg width="15" height="16" viewBox="0 0 15 16" fill="#fff" stroke="#333c46"><path d="M.5 2.500h9v13h-9z" /><path d="M2.500 4.500h5v9h-5z" fill="#8aa0b8" /><path d="M7 1v3M12 1v3M5.500 4h8v4l-2.500 2v5H9v-5L5.500 8z" /></svg></TraySlot>
          <TraySlot $w={24}><svg width="17" height="14" viewBox="0 0 17 14" fill="#fff" stroke="#333c46" strokeWidth=".7"><path d="M.5 11h2v2.500h-2zM4 9h2v4.500H4zM7.500 6.500h2v7h-2zM11 4h2v9.500h-2zM14 1h2.200v12.500H14z" /></svg></TraySlot>
          <Clock>19:16<br />26/08/2020</Clock>
          <ShowDesktop aria-label="Show desktop" />
        </Tray>
      </Taskbar>
    </Window>
  );
}
